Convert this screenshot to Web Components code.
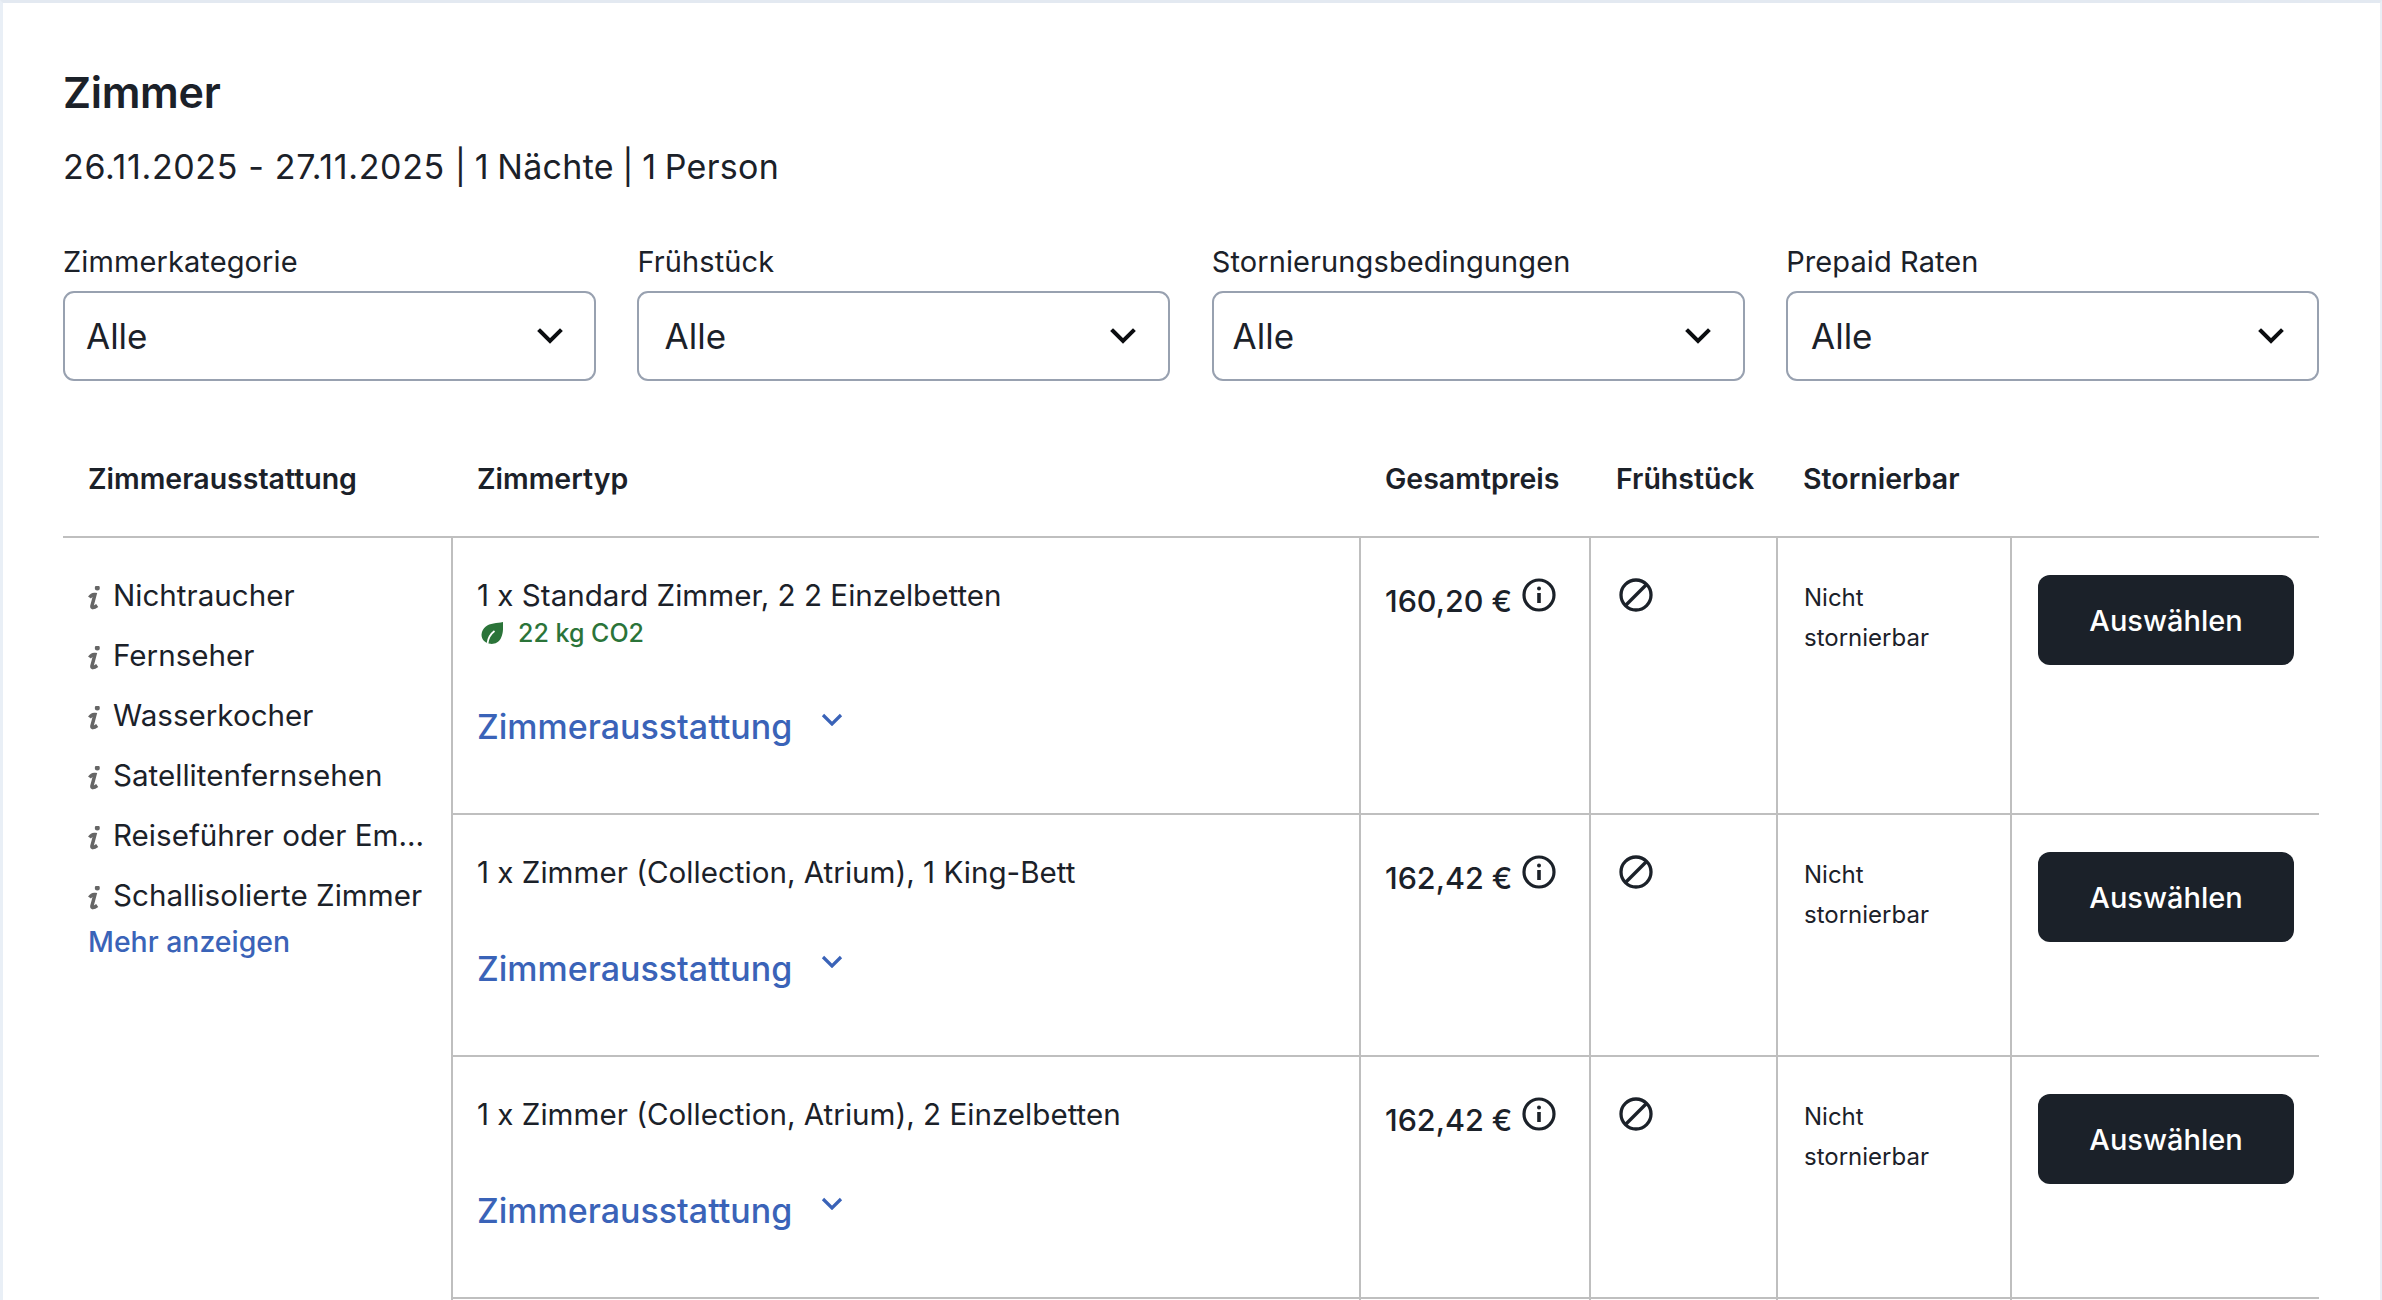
<!DOCTYPE html>
<html lang="de">
<head>
<meta charset="utf-8">
<title>Zimmer</title>
<style>
    html, body { margin: 0; height: 1300px; overflow: hidden; background: #fff; }
    body { font-family: Inter, "Liberation Sans", sans-serif; color: #1b2129; }
</style>
</head>
<body>
<rooms-card>
    <span slot="title">Zimmer</span>
    <span slot="dates"><span style="letter-spacing:.65px">26.11.2025 - 27.11.2025</span> <span style="word-spacing:-1.5px">| 1 Nächte | 1 Person</span></span>
    <room-filter label="Zimmerkategorie" pad="21" chev="30.5"></room-filter>
    <room-filter label="Frühstück" pad="25.2" chev="32.5"></room-filter>
    <room-filter label="Stornierungsbedingungen" pad="18.8" chev="31.5"></room-filter>
    <room-filter label="Prepaid Raten" pad="22.9" chev="33.5"></room-filter>
    <room-table slot="table">
        <amenity-list slot="amenities">
            <amenity-item>Nichtraucher</amenity-item>
            <amenity-item>Fernseher</amenity-item>
            <amenity-item>Wasserkocher</amenity-item>
            <amenity-item>Satellitenfernsehen</amenity-item>
            <amenity-item>Reiseführer oder Em...</amenity-item>
            <amenity-item>Schallisolierte Zimmer</amenity-item>
        </amenity-list>
        <room-row name="1 x Standard Zimmer, 2 2 Einzelbetten" co2="22 kg CO2" price="160,20 €"></room-row>
        <room-row name="1 x Zimmer (Collection, Atrium), 1 King-Bett" price="162,42 €"></room-row>
        <room-row name="1 x Zimmer (Collection, Atrium), 2 Einzelbetten" price="162,42 €"></room-row>
        <room-row></room-row>
    </room-table>
</rooms-card>

<script>
    class RoomsCard extends HTMLElement{
        constructor(){
            super();
            this.attachShadow({mode:'open'});
            this.shadowRoot.innerHTML = `
                <style>
                    :host{
                        display: block;
                        box-sizing: border-box;
                        height: 1300px;
                        padding: 64px 61px 0 60px;
                        border-top: 3px solid #e3e9f1;
                        border-left: 3px solid #e9eff6;
                        border-right: 2px solid #e9eff6;
                    }
                    h2{
                        margin: 0;
                        font-size: 43px;
                        line-height: 50px;
                        font-weight: 600;
                        letter-spacing: -0.3px;
                    }
                    .dates{
                        margin-top: 28px;
                        font-size: 34px;
                        line-height: 44px;
                        letter-spacing: 0.3px;
                    }
                    .filters{
                        display: grid;
                        grid-template-columns: repeat(4,1fr);
                        column-gap: 41.5px;
                        margin-top: 55px;
                    }
                </style>
                <h2><slot name="title"></slot></h2>
                <div class="dates"><slot name="dates"></slot></div>
                <div class="filters"><slot></slot></div>
                <slot name="table"></slot>
            `;
        }
    }

    class RoomFilter extends HTMLElement{
        constructor(){
            super();
            this.attachShadow({mode:'open'});
        }
        connectedCallback(){
            let pad = this.getAttribute('pad');
            let chev = this.getAttribute('chev');
            this.shadowRoot.innerHTML = `
                <style>
                    :host{ display: block; }
                    .label{
                        font-size: 29px;
                        line-height: 36px;
                        letter-spacing: 0.1px;
                        margin-bottom: 11px;
                    }
                    .box{
                        box-sizing: border-box;
                        height: 90px;
                        display: flex;
                        align-items: center;
                        justify-content: space-between;
                        padding: 0 ${chev}px 0 ${pad}px;
                        border: 2px solid #98a1b0;
                        border-radius: 11px;
                        font-size: 35px;
                    }
                    svg{ display: block; }
                </style>
                <div class="label">${this.getAttribute('label')}</div>
                <div class="box">
                    <span>Alle</span>
                    <svg width="26" height="16" viewBox="0 0 26 16" fill="none" stroke="#0b0d10" stroke-width="4" stroke-linecap="square"><path d="M3 3l10 10L23 3"/></svg>
                </div>
            `;
        }
    }

    class RoomTable extends HTMLElement{
        constructor(){
            super();
            this.attachShadow({mode:'open'});
            this.shadowRoot.innerHTML = `
                <style>
                    :host{ display: block; margin-top: 69px; }
                    .head{
                        display: grid;
                        grid-template-columns: 390px 908px 230px 187px 234px 1fr;
                        align-items: center;
                        height: 57px;
                        padding-bottom: 29px;
                        border-bottom: 2px solid #bfbfbf;
                        font-size: 28.5px;
                        font-weight: 600;
                    }
                    .head span:nth-child(1){ padding-left: 25px; }
                    .head span:nth-child(2){ padding-left: 24px; }
                    .head span:nth-child(3){ padding-left: 24px; }
                    .head span:nth-child(4){ padding-left: 25px; }
                    .head span:nth-child(5){ padding-left: 25px; }
                    .body{
                        display: grid;
                        grid-template-columns: 390px 1fr;
                    }
                    .left{ border-right: 2px solid #bfbfbf; }
                </style>
                <div class="head">
                    <span>Zimmerausstattung</span>
                    <span>Zimmertyp</span>
                    <span>Gesamtpreis</span>
                    <span>Frühstück</span>
                    <span>Stornierbar</span>
                </div>
                <div class="body">
                    <div class="left"><slot name="amenities"></slot></div>
                    <div class="right"><slot></slot></div>
                </div>
            `;
        }
    }

    class AmenityList extends HTMLElement{
        constructor(){
            super();
            this.attachShadow({mode:'open'});
            this.shadowRoot.innerHTML = `
                <style>
                    :host{ display: block; padding: 27px 0 0 25px; }
                    a{
                        display: block;
                        margin-top: -1px;
                        font-size: 28.4px;
                        line-height: 36px;
                        font-weight: 500;
                        color: #3a63b8;
                    }
                </style>
                <slot></slot>
                <a>Mehr anzeigen</a>
            `;
        }
    }

    class AmenityItem extends HTMLElement{
        constructor(){
            super();
            this.attachShadow({mode:'open'});
            this.shadowRoot.innerHTML = `
                <style>
                    :host{
                        display: flex;
                        align-items: center;
                        height: 60px;
                        font-size: 29.6px;
                        white-space: nowrap;
                    }
                    svg{ flex: none; margin: 8px 11px 0 0; }
                </style>
                <svg width="14" height="26" viewBox="0 0 14 26"><circle cx="9.300" cy="2" r="2.500" fill="#666"/><path d="M1.500 11.500C3 9.300 5.200 8.200 7 8.500L3.900 20c-.3 2.200 1.600 2.300 5.300-.5" fill="none" stroke="#666" stroke-width="3.500"/></svg>
                <span><slot></slot></span>
            `;
        }
    }

    class RoomRow extends HTMLElement{
        constructor(){
            super();
            this.attachShadow({mode:'open'});
        }
        connectedCallback(){
            let base = `
                :host{
                    display: grid;
                    grid-template-columns: 908px 230px 187px 234px 1fr;
                }
                .cell{
                    box-sizing: border-box;
                    border-right: 2px solid #bfbfbf;
                }
                .cell:last-child{ border-right: 0; }
            `;
            // die angeschnittene Zeile am unteren Rand hat nur ihre Trennlinien
            if(!this.hasAttribute('name')){
                this.shadowRoot.innerHTML = `
                    <style>${base} :host{ height: 2px; overflow: hidden; }</style>
                    <div class="cell"></div><div class="cell"></div><div class="cell"></div><div class="cell"></div><div class="cell"></div>
                `;
                return;
            }
            let co2 = this.getAttribute('co2');
            let co2Html = co2 ? `
                <div class="co2">
                    <svg width="22" height="22" viewBox="0 0 22 22"><path d="M22 0c.3 7 0 12-2 16-2.400 4.700-7 6.500-11 5.800C3.500 21 0 16.800.6 12 1.300 6 6.500 2 12.500 1.400 16 1 19 .8 22 0z" fill="#2b7439"/><path d="M6.500 21.500c.5-5 3-9.500 7-12.500" fill="none" stroke="#fff" stroke-width="1.800"/></svg>
                    <span>${co2}</span>
                </div>` : '';
            this.shadowRoot.innerHTML = `
                <style>
                    ${base}
                    :host{ border-bottom: 2px solid #bfbfbf; }
                    .cell{ padding-top: 40px; }
                    .type{ padding: 38px 0 62px 24px; }
                    .name{ font-size: 29.6px; line-height: 38px; }
                    .co2{
                        display: flex;
                        align-items: center;
                        height: 35px;
                        padding: 3px 0 0 4px;
                        box-sizing: border-box;
                        color: #2b7439;
                        font-size: 25px;
                        font-weight: 500;
                    }
                    .co2 svg{ margin-right: 15px; }
                    .more{
                        display: flex;
                        height: 50px;
                        align-items: center;
                        margin-top: 52px;
                        color: #3a63b8;
                        font-size: 34px;
                        font-weight: 500;
                    }
                    .more svg{ margin: -14px 0 0 29px; }
                    .price{
                        display: flex;
                        align-items: flex-start;
                        gap: 10px;
                        padding-left: 24px;
                    }
                    .price span{
                        margin-top: 4px;
                        font-size: 30.5px;
                        line-height: 38px;
                        font-weight: 500;
                        white-space: nowrap;
                    }
                    .breakfast{ padding-left: 28px; }
                    .storno{
                        padding-left: 26px;
                        font-size: 24px;
                        line-height: 40px;
                    }
                    .action{ padding: 37px 0 0 26px; }
                    .btn{
                        width: 256px;
                        height: 90px;
                        display: flex;
                        align-items: center;
                        justify-content: center;
                        border-radius: 12px;
                        background: #1b2129;
                        color: #fff;
                        font-size: 29px;
                        font-weight: 500;
                    }
                    svg{ display: block; flex: none; }
                </style>
                <div class="cell type">
                    <div class="name">${this.getAttribute('name')}</div>
                    ${co2Html}
                    <div class="more">
                        <span>Zimmerausstattung</span>
                        <svg width="22" height="13" viewBox="0 0 22 13" fill="none" stroke="#3a63b8" stroke-width="3.200"><path d="M2 2l9 9 9-9"/></svg>
                    </div>
                </div>
                <div class="cell price">
                    <span>${this.getAttribute('price')}</span>
                    <svg width="34" height="34" viewBox="0 0 34 34" fill="none" stroke="#1b2129" stroke-width="3.200"><circle cx="17" cy="17" r="15"/><path d="M17 15v10" stroke-width="3.600"/><circle cx="17" cy="10.500" r="2" fill="#1b2129" stroke="none"/></svg>
                </div>
                <div class="cell breakfast">
                    <svg width="34" height="34" viewBox="0 0 34 34" fill="none" stroke="#1b2129" stroke-width="3.300"><circle cx="17" cy="17" r="15"/><path d="M27.500 6.500L6.500 27.500"/></svg>
                </div>
                <div class="cell storno">Nicht<br>stornierbar</div>
                <div class="cell action"><div class="btn">Auswählen</div></div>
            `;
        }
    }

    customElements.define('rooms-card',RoomsCard);
    customElements.define('room-filter',RoomFilter);
    customElements.define('room-table',RoomTable);
    customElements.define('amenity-list',AmenityList);
    customElements.define('amenity-item',AmenityItem);
    customElements.define('room-row',RoomRow);
</script>
</body>
</html>
